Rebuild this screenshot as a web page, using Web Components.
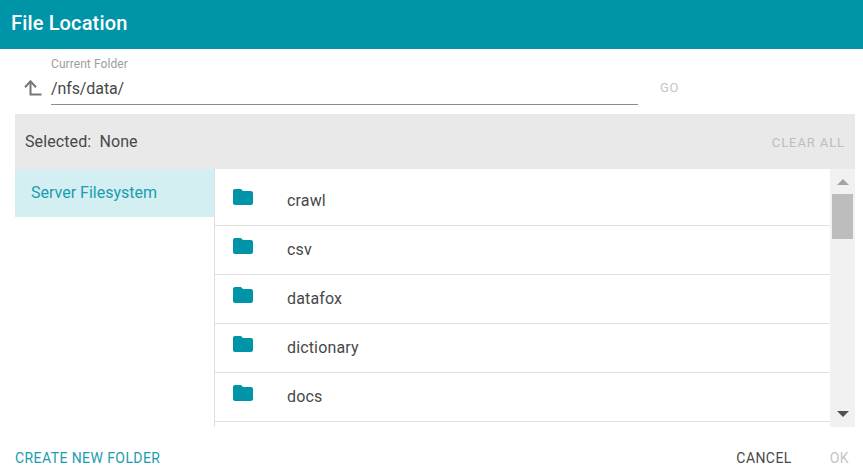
<!DOCTYPE html>
<html lang="en">
<head>
<meta charset="utf-8">
<title>File Location</title>
<style>
html,body{margin:0;padding:0;background:#fff;overflow:hidden}
body{font-family:Roboto,"Liberation Sans",sans-serif;color:#484848}
</style>
</head>
<body>
<file-dialog>
  <dialog-header slot="header">File Location</dialog-header>
  <path-field slot="path" label="Current Folder" value="/nfs/data/"></path-field>
  <selection-bar slot="selection"></selection-bar>
  <source-item slot="sources">Server Filesystem</source-item>
  <folder-row slot="files">crawl</folder-row>
  <folder-row slot="files">csv</folder-row>
  <folder-row slot="files">datafox</folder-row>
  <folder-row slot="files">dictionary</folder-row>
  <folder-row slot="files">docs</folder-row>
  <fake-scrollbar slot="scrollbar"></fake-scrollbar>
  <text-button slot="footer-left" tone="primary">CREATE NEW FOLDER</text-button>
  <text-button slot="footer-right">CANCEL</text-button>
  <text-button slot="footer-right" tone="disabled">OK</text-button>
</file-dialog>
<script>
function define(name, css, html, init){
  customElements.define(name, class extends HTMLElement{
    connectedCallback(){
      if(this.shadowRoot) return;
      const r=this.attachShadow({mode:'open'});
      r.innerHTML='<style>'+css+'</style>'+html;
      if(init) init(this,r);
    }
  });
}
define('file-dialog',`
  :host{display:flex;flex-direction:column;width:863px;height:472px;background:#fff}
  .main{display:flex;height:258px;margin:0 8px 0 15px}
  .sources{width:199px;flex:none}
  .files{flex:1;min-width:0;border-left:1px solid #e0e0e0;padding-top:8px;overflow:hidden;box-sizing:border-box}
  footer{display:flex;justify-content:space-between;align-items:center;height:45px;padding:17px 14px 0 15px;box-sizing:border-box}
  .right{display:flex;gap:38px}
`,`
  <slot name="header"></slot>
  <slot name="path"></slot>
  <slot name="selection"></slot>
  <div class="main">
    <div class="sources"><slot name="sources"></slot></div>
    <div class="files"><slot name="files"></slot></div>
    <slot name="scrollbar"></slot>
  </div>
  <footer>
    <slot name="footer-left"></slot>
    <div class="right"><slot name="footer-right"></slot></div>
  </footer>
`);
define('dialog-header',`
  :host{display:flex;align-items:center;height:49px;padding:0 11px 3px;box-sizing:border-box;background:#0094a8;color:#fff;font:500 20px/24px Roboto,sans-serif;letter-spacing:.15px}
`,`<slot></slot>`);
define('path-field',`
  :host{display:flex;align-items:flex-start;height:65px;box-sizing:border-box;padding:0 0 0 24px;font-family:Roboto,sans-serif}
  svg{flex:none;width:18px;height:16px;margin:31px 9px 0 0;display:block}
  .f{width:587px;flex:none;border-bottom:1px solid #8c8c8c;height:56px;box-sizing:border-box;padding-top:8px}
  .l{font-size:12px;line-height:14px;color:#9e9e9e;letter-spacing:.07px}
  .v{font-size:16px;line-height:20px;color:#484848;margin-top:8px;letter-spacing:-.1px}
  .go{margin:30px 0 0 22px;font-size:13px;line-height:18px;letter-spacing:.6px;color:#c4c4c4}
`,`
  <svg viewBox="0 0 18 16" aria-hidden="true"><path d="M6.5 2v12.5H17.5" fill="none" stroke="#757575" stroke-width="2"/><path d="M1 7.2 6.5 1.3 12 7.2" fill="none" stroke="#757575" stroke-width="2"/></svg>
  <div class="f"><div class="l"></div><div class="v"></div></div>
  <div class="go">GO</div>
`,(h,r)=>{r.querySelector('.l').textContent=h.getAttribute('label');r.querySelector('.v').textContent=h.getAttribute('value');});
define('selection-bar',`
  :host{display:flex;align-items:center;justify-content:space-between;height:55px;margin:0 8px 0 15px;padding:0 10px;background:#e9e9e9;font-family:Roboto,sans-serif;box-sizing:border-box}
  .s{font-size:16px;color:#484848;white-space:pre;letter-spacing:.1px}
  .c{font-size:13px;letter-spacing:.9px;color:#bdbdbd;margin-top:2px}
`,`<div class="s">Selected:  None</div><div class="c">CLEAR ALL</div>`);
define('source-item',`
  :host{display:flex;align-items:center;height:48px;padding:0 16px 1px;box-sizing:border-box;background:#d4eff2;color:#1a9cae;font:16px/20px Roboto,sans-serif}
`,`<slot></slot>`);
define('folder-row',`
  :host{display:flex;align-items:center;height:49px;box-sizing:border-box;border-bottom:1px solid #e0e0e0;padding-left:16px;font:16px/20px Roboto,sans-serif;color:#484848;letter-spacing:.15px}
  svg{width:24px;height:24px;flex:none;margin:-8px 32px 0 0;display:block}
`,`<svg viewBox="0 0 24 24" aria-hidden="true"><path fill="#0094a8" d="M10 4H4c-1.1 0-1.99.9-1.99 2L2 18c0 1.1.9 2 2 2h16c1.1 0 2-.9 2-2V8c0-1.1-.9-2-2-2h-8l-2-2z"/></svg><span><slot></slot></span>`);
define('fake-scrollbar',`
  :host{display:flex;flex-direction:column;width:25px;flex:none;background:#f1f1f1;box-sizing:border-box;align-items:center;justify-content:space-between;height:258px}
  .top{display:flex;flex-direction:column;align-items:center;width:100%}
  .up{width:0;height:0;border:6px solid transparent;border-top:0;border-bottom:6px solid #a3a3a3;margin:10px 0 9px}
  .thumb{width:21px;height:45px;background:#bdbdbd}
  .down{width:0;height:0;border:6px solid transparent;border-bottom:0;border-top:6px solid #505050;margin-bottom:10px}
`,`<div class="top"><div class="up"></div><div class="thumb"></div></div><div class="down"></div>`);
define('text-button',`
  :host{display:inline-block;font:14px/18px Roboto,sans-serif;letter-spacing:.42px;color:#484848;white-space:nowrap}
  :host([tone=primary]){color:#1a9cae}
  :host([tone=disabled]){color:#c4c4c4}
`,`<slot></slot>`);
</script>
</body>
</html>
